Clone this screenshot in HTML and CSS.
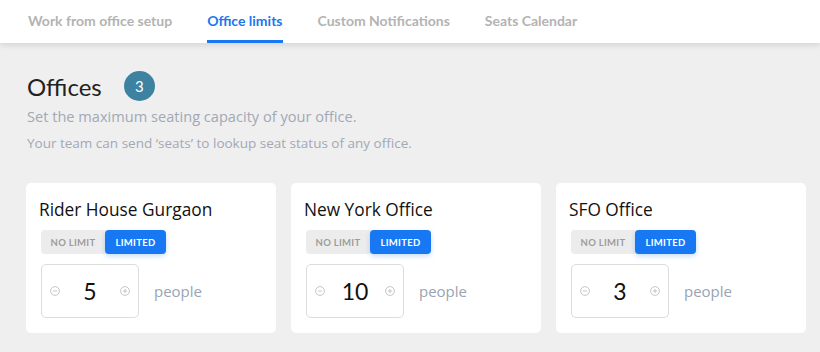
FILE: index.html
```html
<!DOCTYPE html>
<html lang="en">
<head>
    <meta charset="UTF-8">
    <meta name="viewport" content="width=device-width, initial-scale=1.0">
    <title>Office limits</title>
    <link rel="stylesheet" href="styles.css">
</head>
<body>
    <!-- Tabs -->
    <header class="tabs">
        <a href="#" class="tab">Work from office setup</a>
        <a href="#" class="tab active">Office limits</a>
        <a href="#" class="tab">Custom Notifications</a>
        <a href="#" class="tab">Seats Calendar</a>
    </header>

    <main class="content">
        <div class="heading-row">
            <h1>Offices</h1>
            <span class="badge">3</span>
        </div>
        <p class="sub">Set the maximum seating capacity of your office.</p>
        <p class="sub small">Your team can send ‘seats’ to lookup seat status of any office.</p>

        <div class="cards">
            <div class="card">
                <h2>Rider House Gurgaon</h2>
                <div class="toggle">
                    <span class="seg">NO LIMIT</span>
                    <span class="seg on">LIMITED</span>
                </div>
                <div class="limit-row">
                    <div class="stepper">
                        <svg class="step-icon" viewBox="0 0 10 10"><circle cx="5" cy="5" r="4.4"/><path d="M3 5h4"/></svg>
                        <span class="num">5</span>
                        <svg class="step-icon" viewBox="0 0 10 10"><circle cx="5" cy="5" r="4.4"/><path d="M3 5h4M5 3v4"/></svg>
                    </div>
                    <span class="people">people</span>
                </div>
            </div>

            <div class="card">
                <h2>New York Office</h2>
                <div class="toggle">
                    <span class="seg">NO LIMIT</span>
                    <span class="seg on">LIMITED</span>
                </div>
                <div class="limit-row">
                    <div class="stepper">
                        <svg class="step-icon" viewBox="0 0 10 10"><circle cx="5" cy="5" r="4.4"/><path d="M3 5h4"/></svg>
                        <span class="num">10</span>
                        <svg class="step-icon" viewBox="0 0 10 10"><circle cx="5" cy="5" r="4.4"/><path d="M3 5h4M5 3v4"/></svg>
                    </div>
                    <span class="people">people</span>
                </div>
            </div>

            <div class="card">
                <h2>SFO Office</h2>
                <div class="toggle">
                    <span class="seg">NO LIMIT</span>
                    <span class="seg on">LIMITED</span>
                </div>
                <div class="limit-row">
                    <div class="stepper">
                        <svg class="step-icon" viewBox="0 0 10 10"><circle cx="5" cy="5" r="4.4"/><path d="M3 5h4"/></svg>
                        <span class="num">3</span>
                        <svg class="step-icon" viewBox="0 0 10 10"><circle cx="5" cy="5" r="4.4"/><path d="M3 5h4M5 3v4"/></svg>
                    </div>
                    <span class="people">people</span>
                </div>
            </div>
        </div>
    </main>
</body>
</html>
```

FILE: styles.css
```css
* {
    margin: 0;
    padding: 0;
    box-sizing: border-box;
}

body {
    font-family: Lato, 'Liberation Sans', sans-serif;
    background: #efefef;
    color: #1c1c1c;
    overflow: hidden;
}

/* Tabs */
.tabs {
    display: flex;
    gap: 35px;
    height: 43px;
    padding-left: 28px;
    background: #fff;
    box-shadow: 0 2px 6px rgba(0, 0, 0, 0.12);
}

.tab {
    display: flex;
    align-items: center;
    height: 43px;
    padding-top: 1px;
    border-bottom: 3px solid transparent;
    color: #b3b3b3;
    font-size: 14px;
    font-weight: 700;
    text-decoration: none;
}

.tab.active {
    color: #1877f2;
    border-bottom-color: #1877f2;
}

/* Content */
.content {
    padding: 28px 14px 0 27px;
}

.heading-row {
    display: flex;
    align-items: center;
    gap: 22px;
    height: 30px;
}

h1 {
    font-size: 24px;
    font-weight: 400;
    color: #222;
}

.badge {
    width: 31px;
    height: 30px;
    border-radius: 50%;
    background: #3d82a1;
    color: #fff;
    font-size: 15px;
    display: flex;
    align-items: center;
    justify-content: center;
}

.sub {
    font-family: 'Open Sans', Lato, sans-serif;
    font-size: 14.6px;
    color: #a2a8b6;
    line-height: 18px;
    margin-top: 6px;
}

.sub.small {
    font-size: 13.5px;
    margin-top: 9px;
}

/* Cards */
.cards {
    display: flex;
    gap: 15px;
    margin-top: 31px;
    margin-left: -1px;
}

.card {
    width: 250px;
    height: 150px;
    background: #fff;
    border-radius: 5px;
    padding: 16px 15px 15px;
}

h2 {
    font-family: 'Open Sans', Lato, sans-serif;
    font-size: 17.3px;
    font-weight: 400;
    line-height: 22px;
    color: #111;
    margin-left: -2px;
}

.toggle {
    display: inline-flex;
    margin-top: 9px;
    height: 24px;
    background: #ececec;
    border-radius: 4px;
}

.seg {
    display: flex;
    align-items: center;
    justify-content: center;
    width: 64px;
    font-size: 9.5px;
    font-weight: 700;
    letter-spacing: 0.3px;
    color: #9c9c9c;
}

.seg.on {
    width: 61px;
    background: #1877f2;
    color: #fff;
    border-radius: 4px;
    box-shadow: 0 2px 5px rgba(24, 119, 242, 0.25);
}

.limit-row {
    display: flex;
    align-items: center;
    gap: 15px;
    margin-top: 10px;
}

.stepper {
    display: flex;
    align-items: center;
    justify-content: space-between;
    width: 98px;
    height: 54px;
    padding: 0 8px;
    border: 1px solid #dcdcdc;
    border-radius: 5px;
}

.step-icon {
    width: 10px;
    height: 10px;
    fill: none;
    stroke: #b8b8b8;
    stroke-width: 0.8;
}

.num {
    font-size: 23px;
    color: #111;
}

.people {
    font-family: 'Open Sans', Lato, sans-serif;
    font-size: 15px;
    color: #9aa3b3;
}
```
